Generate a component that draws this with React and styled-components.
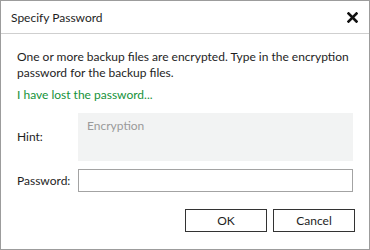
import React from 'react';
import styled, { createGlobalStyle } from 'styled-components';

const GlobalStyle = createGlobalStyle`
    html, body {
        margin: 0;
        padding: 0;
        background: #ffffff;
    }

    * {
        box-sizing: border-box;
    }
`;

const Dialog = styled.div`
    width: 370px;
    height: 250px;
    border: 1px solid #9c9c9c;
    background: #ffffff;
    display: flex;
    flex-direction: column;
    font-family: Lato, "Noto Sans", sans-serif;
    font-size: 12px;
    color: #1e1e1e;
`;

const TitleBar = styled.div`
    height: 33px;
    flex-shrink: 0;
    display: flex;
    align-items: center;
    justify-content: space-between;
    padding: 0 10px 0 10px;
    border-bottom: 1px solid #cfcfcf;
`;

const Title = styled.span`
    font-size: 12px;
    color: #1e1e1e;
`;

const CloseButton = styled.button`
    width: 14px;
    height: 14px;
    padding: 0;
    border: none;
    background: transparent;
    display: flex;
    align-items: center;
    justify-content: center;
    cursor: pointer;
`;

const Body = styled.div`
    flex: 1;
    padding: 15px 16px 0 16px;
    display: flex;
    flex-direction: column;
`;

const Message = styled.p`
    margin: 0;
    line-height: 16px;
`;

const LostLink = styled.a`
    margin-top: 6px;
    line-height: 16px;
    color: #15923a;
    text-decoration: none;
    cursor: pointer;
`;

const FieldRow = styled.div`
    display: grid;
    grid-template-columns: 61px 1fr;
    align-items: center;
    margin-top: ${props => props.gap}px;
`;

const FieldLabel = styled.label`
    line-height: 16px;
`;

const HintBox = styled.div`
    height: 48px;
    background: #f2f3f3;
    color: #9a9a9a;
    padding: 5px 9px;
    line-height: 16px;
`;

const PasswordInput = styled.input`
    height: 23px;
    border: 1px solid #a3a3a3;
    padding: 0 5px;
    font-family: inherit;
    font-size: 12px;
    outline: none;
`;

const ButtonRow = styled.div`
    display: flex;
    justify-content: flex-end;
    gap: 6px;
    margin-top: 17px;
    margin-right: -2px;
`;

const Button = styled.button`
    width: 82px;
    height: 23px;
    border: 1px solid #333333;
    background: #ffffff;
    font-family: inherit;
    font-size: 12px;
    color: #1e1e1e;
    padding: 0;
    cursor: pointer;
`;

export default function App() {
    return (
        <>
            <GlobalStyle />
            <Dialog>
                <TitleBar>
                    <Title>Specify Password</Title>
                    <CloseButton aria-label="Close">
                        <svg width="11" height="11" viewBox="0 0 11 11">
                            <path d="M1.5 1.5 L9.5 9.5 M9.5 1.5 L1.5 9.5" stroke="#111" strokeWidth="2.6" strokeLinecap="square" />
                        </svg>
                    </CloseButton>
                </TitleBar>
                <Body>
                    <Message>
                        One or more backup files are encrypted. Type in the encryption password for the backup files.
                    </Message>
                    <LostLink>I have lost the password...</LostLink>
                    <FieldRow gap={10}>
                        <FieldLabel>Hint:</FieldLabel>
                        <HintBox>Encryption</HintBox>
                    </FieldRow>
                    <FieldRow gap={8}>
                        <FieldLabel>Password:</FieldLabel>
                        <PasswordInput type="password" />
                    </FieldRow>
                    <ButtonRow>
                        <Button>OK</Button>
                        <Button>Cancel</Button>
                    </ButtonRow>
                </Body>
            </Dialog>
        </>
    );
}
